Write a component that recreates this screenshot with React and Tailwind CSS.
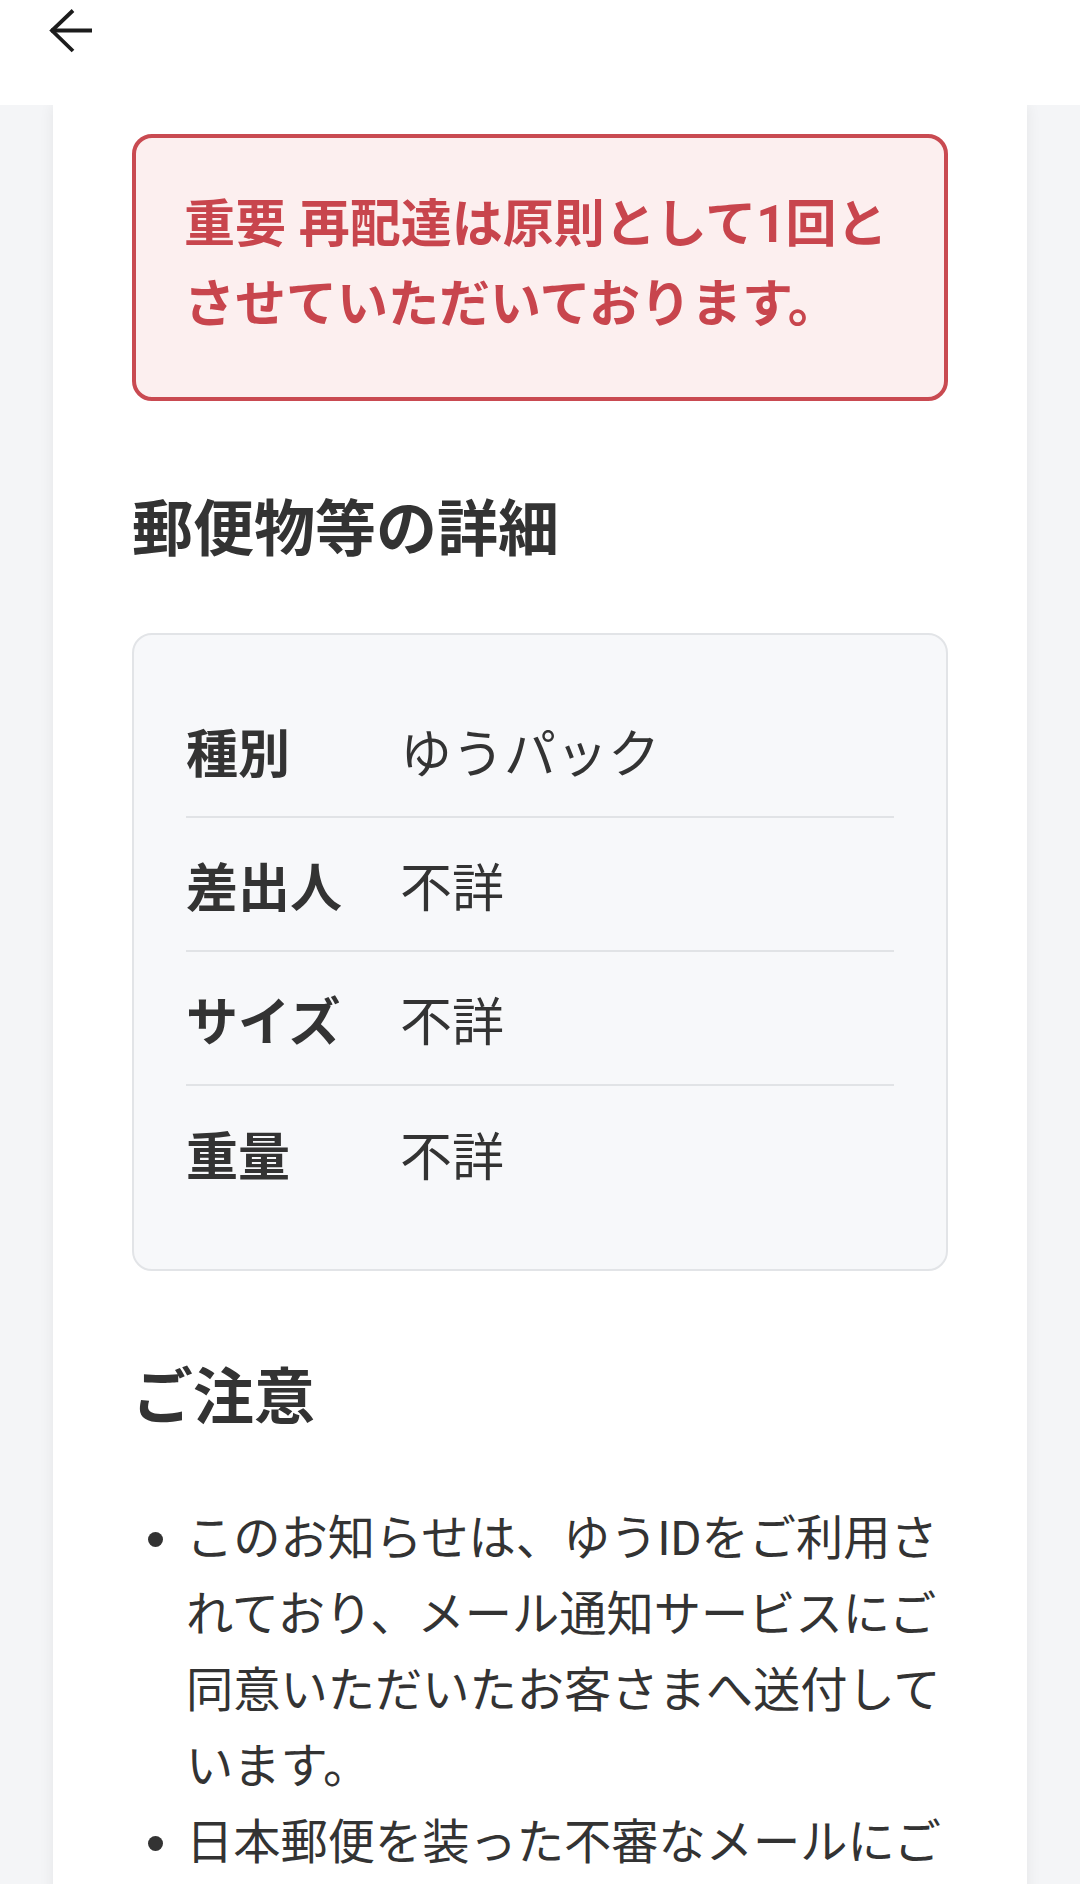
import React from 'react'

const rows = [
  { label: '種別', value: 'ゆうパック' },
  { label: '差出人', value: '不詳' },
  { label: 'サイズ', value: '不詳' },
  { label: '重量', value: '不詳' },
]

const notes = [
  'このお知らせは、ゆうIDをご利用されており、メール通知サービスにご同意いただいたお客さまへ送付しています。',
  '日本郵便を装った不審なメールにご注意ください。',
]

function BackArrow() {
  return (
    <svg width="52" height="52" viewBox="0 0 52 52" fill="none">
      <path d="M48 24.5H7" stroke="#1c1c1c" strokeWidth="3.8" />
      <path d="M29 4.5L8 24.5L29 45" stroke="#1c1c1c" strokeWidth="3.8" strokeLinejoin="miter" />
    </svg>
  )
}

export default function App() {
  return (
    <div className="min-h-[1884px] flex flex-col bg-[#f4f5f7] text-[#333333] font-['Roboto','Noto_Sans_CJK_JP',sans-serif]">
      {/* top bar */}
      <header className="relative z-10 h-[105px] shrink-0 bg-white">
        <button className="ml-[44px] mt-[6px] block">
          <BackArrow />
        </button>
      </header>

      <main className="flex-1 mx-[53px] bg-white shadow-[0_0_14px_rgba(0,0,0,0.07)] px-[79px] pt-[29px] pb-[60px]">
        {/* notice */}
        <div className="rounded-[20px] border-4 border-[#c94a51] bg-[#fcefef] pl-[48px] pr-[50px] pt-[47px] pb-[52px]">
          <p className="text-[51px] leading-[80px] font-bold text-[#c8454d]">
            重要 再配達は原則として1回とさせていただいております。
          </p>
        </div>

        <h2 className="mt-[87px] text-[61px] leading-[85px] font-bold">郵便物等の詳細</h2>

        <div className="mt-[60px] rounded-[20px] border-2 border-[#e2e4e7] bg-[#f7f8fa] px-[52px] py-[49px]">
          {rows.map((r, i) => (
            <div
              key={r.label}
              className={
                'flex items-center h-[134px] pt-[12px] text-[52px] leading-[84px] ' +
                (i < rows.length - 1 ? 'border-b-2 border-[#e1e3e6]' : '')
              }
            >
              <span className="w-[214px] shrink-0 font-bold">{r.label}</span>
              <span>{r.value}</span>
            </div>
          ))}
        </div>

        <h2 className="mt-[85px] text-[61px] leading-[85px] font-bold">ご注意</h2>

        <ul className="mt-[60px]">
          {notes.map(n => (
            <li key={n} className="flex">
              <span className="w-[54px] h-[76px] shrink-0 flex items-center">
                <span className="ml-[16px] w-[15px] h-[15px] rounded-full bg-[#333333]" />
              </span>
              <span className="text-[47.25px] leading-[76px]">{n}</span>
            </li>
          ))}
        </ul>
      </main>
    </div>
  )
}
